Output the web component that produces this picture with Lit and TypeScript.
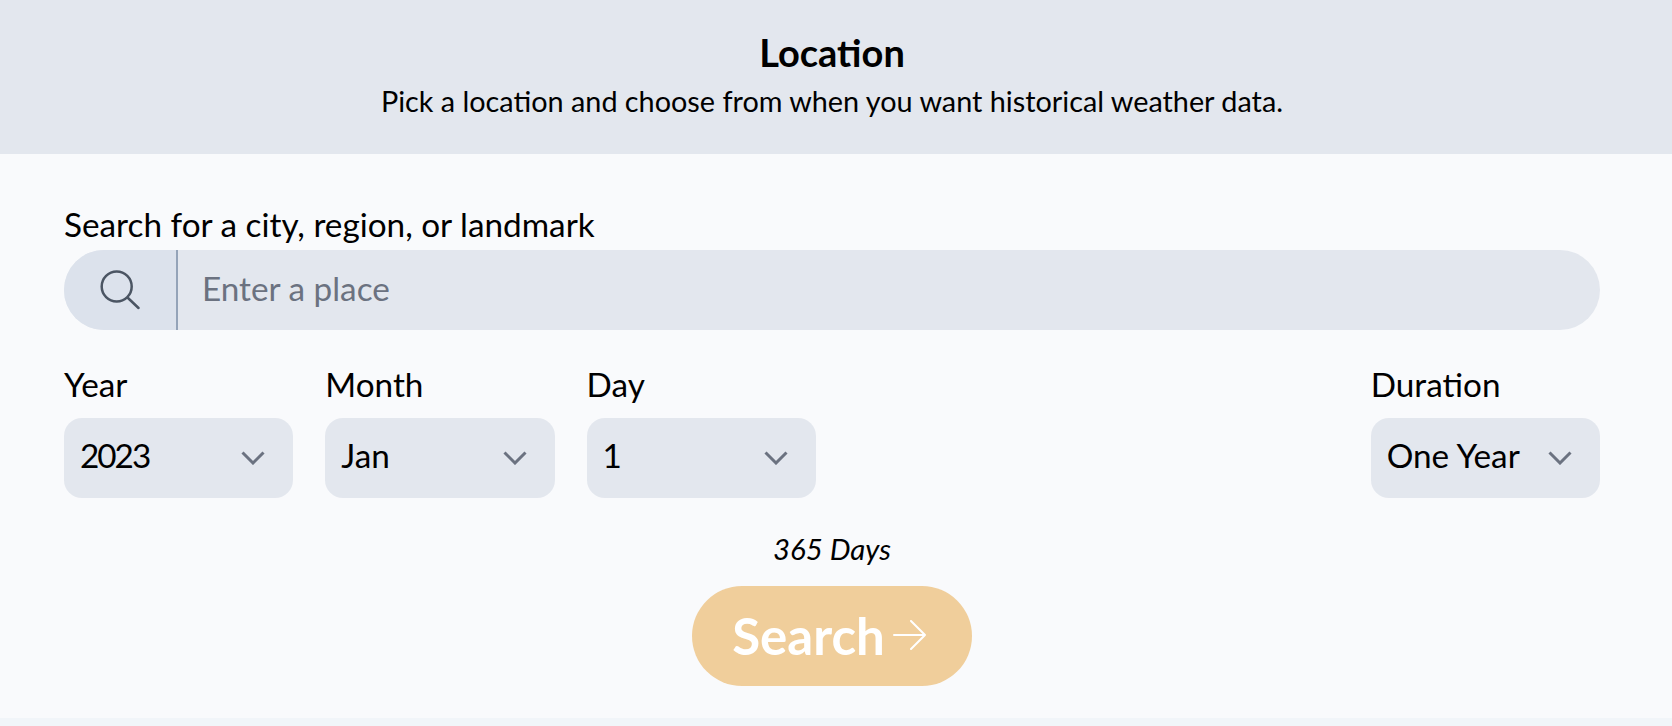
import { LitElement, html, css } from "lit";
import { customElement } from "lit/decorators.js";

const chevron = html`<svg class="chev" width="24" height="14" viewBox="0 0 24 14" fill="none" stroke="#6b7280" stroke-width="3" stroke-linejoin="miter"><path d="M1.5 1.5l10.5 10.5L22.5 1.5"/></svg>`;

@customElement("app-root")
export class AppRoot extends LitElement {
  static styles = css`
    :host { display: block; width: 100%; height: 726px; background: #f1f5f9; font-family: "Lato", "Noto Sans", sans-serif; color: #000; overflow: hidden; }
    .card { height: 718px; background: #f9fafc; display: flex; flex-direction: column; }
    .head { height: 154px; box-sizing: border-box; background: #e3e7ee; display: flex; flex-direction: column; align-items: center; padding: 30px 8px 0 0; }
    h1 { margin: 0; font-size: 38px; line-height: 44px; font-weight: 700; }
    .sub { margin: 9px 0 0; font-size: 28.8px; line-height: 36px; }
    .body { padding: 47px 72px 0 64px; display: flex; flex-direction: column; }
    .lab { font-size: 33.3px; line-height: 46px; display: block; }
    .lab1 { margin-bottom: 3px; }
    .search { display: flex; height: 80px; border-radius: 40px; background: #e3e7ee; overflow: hidden; }
    .ico { width: 114px; box-sizing: border-box; background: #dce2ec; border-right: 2px solid #94a3b8; display: flex; align-items: center; justify-content: center; }
    .ph { flex: 1; min-width: 0; border: 0; outline: 0; background: none; padding: 0 0 4px 24px; font: inherit; font-size: 33.3px; color: #000; }
    .ph::placeholder { color: #6b7280; opacity: 1; }
    .row { display: flex; gap: 32px; margin-top: 31px; }
    .field { width: 229.3px; }
    .push { margin-left: auto; }
    .lab2 { margin-bottom: 11px; }
    .sel { height: 80px; border-radius: 18px; background: #e3e7ee; display: flex; align-items: center; justify-content: space-between; padding: 0 28px 0 16px; font-size: 33.3px; box-sizing: border-box; }
    .val { padding-bottom: 6px; }
    .num { letter-spacing: -2px; }
    .chev { flex: none; }
    .days { text-align: center; font-style: italic; font-size: 29.4px; line-height: 36px; margin-top: 33px; }
    .btn { align-self: center; margin-top: 19px; width: 280px; height: 100px; border-radius: 50px; border: 0; background: #f0ce9b; color: #fff; font: inherit; font-size: 51px; font-weight: 700; display: flex; align-items: center; justify-content: center; gap: 8px; padding: 0 6px 2px 0; }
  `;

  private sel(label: string, value: string, push = false) {
    const num = value === "2023";
    return html`<div class="field ${push ? "push" : ""}"><span class="lab lab2">${label}</span><div class="sel"><span class="val ${num ? "num" : ""}">${value}</span>${chevron}</div></div>`;
  }

  render() {
    return html`<div class="card">
      <div class="head"><h1>Location</h1><p class="sub">Pick a location and choose from when you want historical weather data.</p></div>
      <div class="body">
        <label class="lab lab1">Search for a city, region, or landmark</label>
        <div class="search">
          <div class="ico"><svg width="40" height="40" viewBox="0 0 40 40" fill="none" stroke="#4b5563" stroke-width="2.5" stroke-linecap="round"><circle cx="16.7" cy="16.5" r="15"/><path d="M28 28l10.5 10"/></svg></div>
          <input class="ph" placeholder="Enter a place" />
        </div>
        <div class="row">
          ${this.sel("Year", "2023")}${this.sel("Month", "Jan")}${this.sel("Day", "1")}${this.sel("Duration", "One Year", true)}
        </div>
        <div class="days">365 Days</div>
        <button class="btn">Search<svg width="33" height="30" viewBox="0 0 33 30" fill="none" stroke="#fff" stroke-width="2" stroke-linecap="round" stroke-linejoin="round"><path d="M1 15h31M18 1l14 14-14 14"/></svg></button>
      </div>
    </div>`;
  }
}
